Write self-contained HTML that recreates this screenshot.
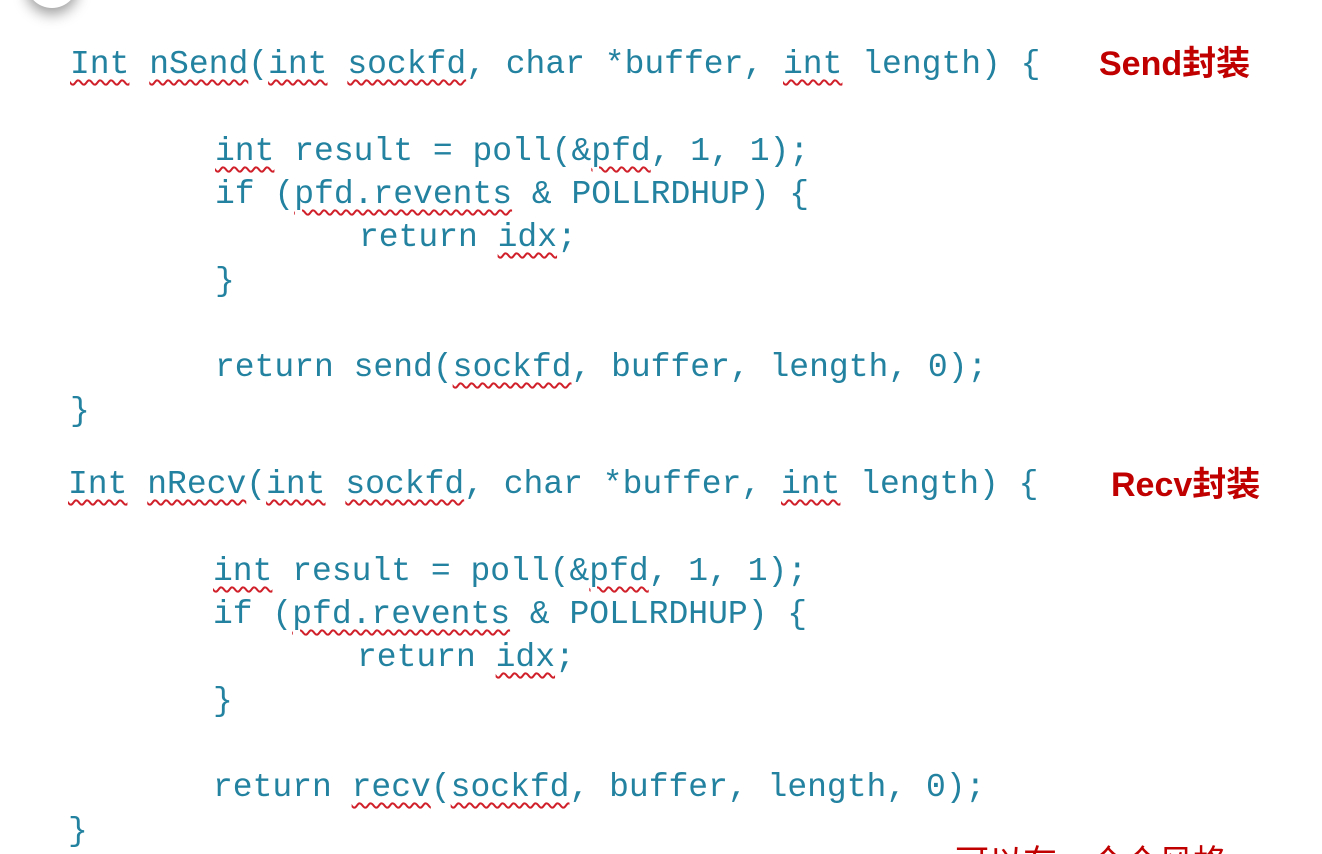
<!DOCTYPE html>
<html><head><meta charset="utf-8"><style>
html,body{margin:0;padding:0;width:1322px;height:854px;overflow:hidden;background:#fff;position:relative}
.l{position:absolute;white-space:pre;font-family:"Liberation Mono",monospace;font-size:33px;line-height:44px;color:#2382a0;height:44px}
.w{text-decoration:underline wavy #d0202a;text-decoration-thickness:1.5px;text-underline-offset:6px}
.r{position:absolute;font-family:"Liberation Sans","Noto Sans CJK SC",sans-serif;font-weight:bold;color:#c00000;font-size:34px;line-height:40px;white-space:nowrap}
.sh{position:absolute;left:26px;top:-44px;width:52px;height:52px;border-radius:50%;box-shadow:0 6px 14px rgba(0,0,0,.4);background:#fff}
</style></head><body>
<div class="sh"></div>
<div class="l" style="left:70px;top:43px"><span class="w">Int</span> <span class="w">nSend</span>(<span class="w">int</span> <span class="w">sockfd</span>, char *buffer, <span class="w">int</span> length) {</div>
<div class="r" style="left:1099px;top:44px">Send封装</div>
<div class="l" style="left:215px;top:130px"><span class="w">int</span> result = poll(&amp;<span class="w">pfd</span>, 1, 1);</div>
<div class="l" style="left:215px;top:173px">if (<span class="w">pfd.revents</span> &amp; POLLRDHUP) {</div>
<div class="l" style="left:359px;top:216px">return <span class="w">idx</span>;</div>
<div class="l" style="left:215px;top:260px">}</div>
<div class="l" style="left:215px;top:346px">return send(<span class="w">sockfd</span>, buffer, length, 0);</div>
<div class="l" style="left:70px;top:390px">}</div>

<div class="l" style="left:68px;top:463px"><span class="w">Int</span> <span class="w">nRecv</span>(<span class="w">int</span> <span class="w">sockfd</span>, char *buffer, <span class="w">int</span> length) {</div>
<div class="r" style="left:1111px;top:465px">Recv封装</div>
<div class="l" style="left:213px;top:550px"><span class="w">int</span> result = poll(&amp;<span class="w">pfd</span>, 1, 1);</div>
<div class="l" style="left:213px;top:593px">if (<span class="w">pfd.revents</span> &amp; POLLRDHUP) {</div>
<div class="l" style="left:357px;top:636px">return <span class="w">idx</span>;</div>
<div class="l" style="left:213px;top:680px">}</div>
<div class="l" style="left:213px;top:766px">return <span class="w">recv</span>(<span class="w">sockfd</span>, buffer, length, 0);</div>
<div class="l" style="left:68px;top:810px">}</div>
<div class="r" style="left:955px;top:843px;font-weight:normal">可以在一个个风格</div>
</body></html>
